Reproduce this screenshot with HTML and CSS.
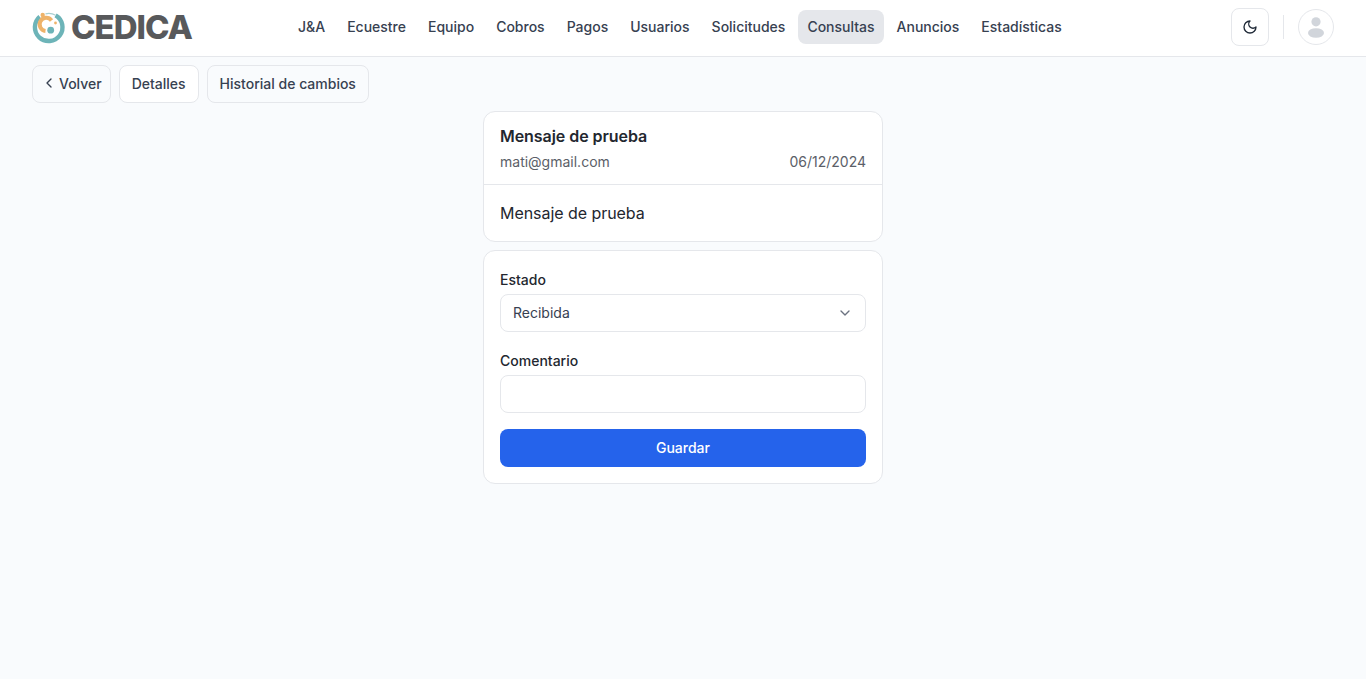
FILE: index.html
```html
<!DOCTYPE html>
<html lang="es">
<head>
    <meta charset="UTF-8">
    <meta name="viewport" content="width=device-width, initial-scale=1.0">
    <title>CEDICA - Consultas</title>
    <link rel="stylesheet" href="styles.css">
</head>
<body>
    <header class="navbar">
        <a class="logo" href="#">
            <svg class="logo-icon" width="36" height="30" viewBox="0 0 36 30">
                <path d="M23.6 3.3 A13.8 13.8 0 1 1 7.8 4.7" fill="none" stroke="#6db4b8" stroke-width="4.4"/>
                <path d="M13.5 1.9 A13.8 13.8 0 0 1 23.6 3.3" fill="none" stroke="#a9cfd0" stroke-width="1.2"/>
                <circle cx="10.7" cy="3" r="2.2" fill="#eeb36a"/>
                <path d="M19.5 8.5 A6.6 6.6 0 1 0 13.5 19" fill="none" stroke="#eeb36a" stroke-width="4"/>
                <circle cx="23.5" cy="11" r="1.4" fill="#eeb36a"/>
                <circle cx="18.7" cy="18.2" r="3.4" fill="#6db4b8"/>
            </svg>
            <span class="logo-text">CEDICA</span>
        </a>

        <nav class="nav-links">
            <a href="#">J&amp;A</a>
            <a href="#">Ecuestre</a>
            <a href="#">Equipo</a>
            <a href="#">Cobros</a>
            <a href="#">Pagos</a>
            <a href="#">Usuarios</a>
            <a href="#">Solicitudes</a>
            <a href="#" class="active">Consultas</a>
            <a href="#">Anuncios</a>
            <a href="#">Estadísticas</a>
        </nav>

        <div class="nav-right">
            <button class="theme-btn" aria-label="Cambiar tema">
                <svg width="16" height="16" viewBox="0 0 24 24" fill="none" stroke="#1f2937" stroke-width="2" stroke-linecap="round" stroke-linejoin="round">
                    <path d="M12 3a6 6 0 0 0 9 9 9 9 0 1 1-9-9Z"/>
                </svg>
            </button>
            <span class="divider"></span>
            <span class="avatar">
                <svg width="16" height="21" viewBox="0 0 16 21">
                    <circle cx="8" cy="4.8" r="4.6" fill="#d1d5db"/>
                    <ellipse cx="8" cy="16" rx="8" ry="4.8" fill="#d1d5db"/>
                </svg>
            </span>
        </div>
    </header>

    <div class="tabs">
        <a href="#" class="tab back">
            <svg width="16" height="16" viewBox="0 0 24 24" fill="none" stroke="#374151" stroke-width="2" stroke-linecap="round" stroke-linejoin="round">
                <path d="m15 18-6-6 6-6"/>
            </svg>
            Volver
        </a>
        <a href="#" class="tab current">Detalles</a>
        <a href="#" class="tab">Historial de cambios</a>
    </div>

    <main class="content">
        <section class="card message">
            <div class="message-head">
                <h2>Mensaje de prueba</h2>
                <div class="message-meta">
                    <span>mati@gmail.com</span>
                    <span>06/12/2024</span>
                </div>
            </div>
            <p class="message-body">Mensaje de prueba</p>
        </section>

        <form class="card form">
            <label for="estado">Estado</label>
            <div class="select-box" id="estado">
                <span>Recibida</span>
                <svg width="16" height="16" viewBox="0 0 24 24" fill="none" stroke="#6b7280" stroke-width="2" stroke-linecap="round" stroke-linejoin="round">
                    <path d="m6 9 6 6 6-6"/>
                </svg>
            </div>

            <label for="comentario" class="second">Comentario</label>
            <input type="text" id="comentario">

            <button type="button" class="save-btn">Guardar</button>
        </form>
    </main>
</body>
</html>
```

FILE: styles.css
```css
* {
    margin: 0;
    padding: 0;
    box-sizing: border-box;
    font-family: Inter, "Noto Sans", sans-serif;
}

body {
    background: #f9fbfd;
    color: #23272f;
    height: 679px;
    overflow: hidden;
}

a {
    text-decoration: none;
}

/* Navbar */
.navbar {
    display: flex;
    align-items: center;
    height: 57px;
    padding: 0 32px 2px;
    background: white;
    border-bottom: 1px solid #e5e7eb;
}

.logo {
    display: flex;
    align-items: center;
    gap: 3px;
    width: 257px;
}

.logo-icon {
    flex-shrink: 0;
    overflow: visible;
}

.logo-text {
    font-size: 33px;
    font-weight: 800;
    line-height: 30px;
    letter-spacing: -1px;
    color: #58595b;
}

.nav-links {
    display: flex;
    align-items: center;
    gap: 4px;
}

.nav-links a {
    padding: 0 9px;
    height: 34px;
    line-height: 34px;
    font-size: 14px;
    font-weight: 500;
    color: #374151;
    border-radius: 8px;
}

.nav-links a.active {
    background: #e5e7eb;
}

.nav-right {
    display: flex;
    align-items: center;
    margin-left: auto;
}

.theme-btn {
    display: flex;
    align-items: center;
    justify-content: center;
    width: 38px;
    height: 38px;
    background: white;
    border: 1px solid #e5e7eb;
    border-radius: 8px;
}

.divider {
    width: 1px;
    height: 24px;
    margin: 0 14px;
    background: #e5e7eb;
}

.avatar {
    display: flex;
    align-items: center;
    justify-content: center;
    width: 36px;
    height: 36px;
    background: white;
    border: 1px solid #e5e7eb;
    border-radius: 50%;
}

/* Tabs */
.tabs {
    display: flex;
    gap: 8px;
    padding: 8px 32px;
}

.tab {
    display: flex;
    align-items: center;
    gap: 4px;
    height: 38px;
    padding: 0 12px 2px;
    font-size: 14px;
    font-weight: 500;
    color: #374151;
    background: #f9fbfd;
    border: 1px solid #e5e7eb;
    border-radius: 8px;
}

.tab.back {
    gap: 2px;
    padding: 0 8px 2px 8px;
}

.tab.current {
    background: white;
}

/* Cards */
.content {
    display: flex;
    flex-direction: column;
    align-items: center;
    gap: 8px;
}

.card {
    width: 400px;
    background: white;
    border: 1px solid #e5e7eb;
    border-radius: 12px;
}

.message-head {
    padding: 14px 16px 12px;
    border-bottom: 1px solid #e5e7eb;
}

.message-head h2 {
    font-size: 16px;
    font-weight: 600;
    line-height: 20px;
    letter-spacing: -0.05px;
}

.message-meta {
    display: flex;
    justify-content: space-between;
    margin-top: 6px;
    font-size: 14px;
    line-height: 20px;
    color: #5b6068;
}

.message-body {
    padding: 16px;
    font-size: 16px;
    line-height: 24px;
    letter-spacing: -0.05px;
}

.form {
    display: flex;
    flex-direction: column;
    padding: 19px 16px 16px;
}

.form label {
    font-size: 14px;
    font-weight: 500;
    line-height: 20px;
    margin-bottom: 4px;
}

.form label.second {
    margin-top: 19px;
}

.select-box, .form input {
    width: 100%;
    height: 38px;
    border: 1px solid #e5e7eb;
    border-radius: 8px;
    background: white;
}

.select-box {
    display: flex;
    align-items: center;
    justify-content: space-between;
    padding: 0 12px 1px;
    font-size: 14px;
    color: #374151;
}

.save-btn {
    height: 38px;
    padding-bottom: 2px;
    margin-top: 16px;
    font-size: 14px;
    font-weight: 500;
    color: white;
    background: #2563eb;
    border: none;
    border-radius: 8px;
}
```
